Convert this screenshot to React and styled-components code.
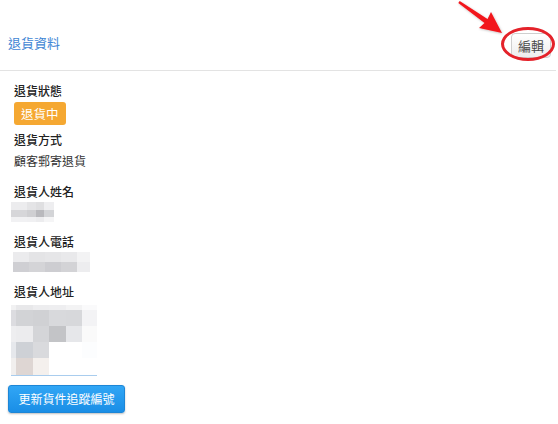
import React from "react";
import styled, { createGlobalStyle } from "styled-components";

const GlobalStyle = createGlobalStyle`
  html, body {
    margin: 0;
    padding: 0;
    background: #ffffff;
  }
  body {
    font-family: "Liberation Sans", "Noto Sans CJK TC", sans-serif;
    color: #333333;
  }
`;

const nameTiles = [
  ["#ececee", "#e4e4e6", "#dfdfe1", "#eeeef0"],
  ["#d6d6d9", "#cfcfd2", "#b9b9bd", "#d3d4d7"],
  ["#f1f1f3", "#f0f0f2", "#ececee", "#f5f5f6"],
];
const nameCols = [16, 9, 8, 10];
const nameRows = [8, 7, 5];

const phoneTiles = [
  ["#ebebed", "#e4e4e6", "#e6e6e8", "#e9e9eb", "#f3f3f4"],
  ["#cfcfd3", "#d4d4d7", "#cdcdd1", "#d3d3d6", "#ededef"],
];
const phoneCols = [16, 16, 16, 16, 13];
const phoneRows = [10, 10];

const addrTiles = [
  ["#f1f1f2", "#e8e8ea", "#ededef", "#eeeef0", "#f3f3f4", "#fafafb"],
  ["#dcdce0", "#d2d3d6", "#d0d1d4", "#d8d9dc", "#d7d8db", "#f3f3f5"],
  ["#eeeef0", "#ececee", "#d4d5d8", "#c3c4c7", "#e6e7ea", "#fafafa"],
  ["#e6e8ec", "#ced1d6", "#d9dadd", "#ffffff", "#ffffff", "#fcfdfe"],
  ["#f1efee", "#ded6d3", "#f4f0ed", "#ffffff", "#ffffff", "#ffffff"],
];
const addrCols = [5, 17, 16, 17, 16, 15];
const addrRows = [5, 16, 16, 16, 17];

function Mosaic({ tiles, cols, rows, underline }) {
  const width = cols.reduce((a, b) => a + b, 0);
  const height = rows.reduce((a, b) => a + b, 0) + (underline ? 1 : 0);
  const rects = [];
  let y = 0;
  rows.forEach((h, r) => {
    let x = 0;
    cols.forEach((w, c) => {
      rects.push(<rect key={r + "-" + c} x={x} y={y} width={w} height={h} fill={tiles[r][c]} />);
      x += w;
    });
    y += h;
  });
  return (
    <svg width={width} height={height} viewBox={`0 0 ${width} ${height}`}>
      {rects}
      {underline && <rect x={0} y={y} width={width} height={1} fill="#a9cdee" />}
    </svg>
  );
}

export default function App() {
  return (
    <>
      <GlobalStyle />
      <Page>
        <Header>
          <Title>退貨資料</Title>
          <EditWrap>
            <EditButton>編輯</EditButton>
            <Highlight />
          </EditWrap>
          <Arrow width="60" height="40" viewBox="450 0 60 40">
            <defs>
              <filter id="sh" x="-20%" y="-20%" width="140%" height="140%">
                <feDropShadow dx="0.6" dy="0.8" stdDeviation="0.8" floodColor="#000" floodOpacity="0.25" />
              </filter>
            </defs>
            <polygon
              points="459.7,1 487.5,19 491,12 502,33 479,28 484.5,23 458.3,3"
              fill="#f2161c"
              filter="url(#sh)"
            />
          </Arrow>
        </Header>

        <Content>
          <Field $gap={6}>
            <Label>退貨狀態</Label>
            <Badge>退貨中</Badge>
          </Field>

          <Field $gap={13}>
            <Label>退貨方式</Label>
            <Value>顧客郵寄退貨</Value>
          </Field>

          <Field $gap={11}>
            <Label>退貨人姓名</Label>
            <Blur $top={1} $shift={-3}>
              <Mosaic tiles={nameTiles} cols={nameCols} rows={nameRows} />
            </Blur>
          </Field>

          <Field $gap={11}>
            <Label>退貨人電話</Label>
            <Blur $top={1} $shift={-1}>
              <Mosaic tiles={phoneTiles} cols={phoneCols} rows={phoneRows} />
            </Blur>
          </Field>

          <Field $gap={0}>
            <Label>退貨人地址</Label>
            <Blur $top={4} $shift={-3}>
              <Mosaic tiles={addrTiles} cols={addrCols} rows={addrRows} underline />
            </Blur>
          </Field>

          <PrimaryButton>更新貨件追蹤編號</PrimaryButton>
        </Content>
      </Page>
    </>
  );
}

const Page = styled.div`
  width: 558px;
  height: 424px;
  background: #ffffff;
`;

const Header = styled.div`
  position: relative;
  display: flex;
  justify-content: space-between;
  align-items: flex-start;
  padding: 33px 5px 12px 8px;
  margin-right: 2px;
  border-bottom: 1px solid #e3e3e3;
`;

const Title = styled.div`
  margin-top: 1px;
  font-size: 13px;
  line-height: 18px;
  color: #3f86d4;
  font-family: "Noto Sans CJK TC", sans-serif;
`;

const EditWrap = styled.div`
  position: relative;
`;

const EditButton = styled.button`
  display: block;
  height: 25px;
  padding: 0 6px;
  border: 1px solid #cfcfcf;
  border-radius: 4px;
  background: linear-gradient(#ffffff, #eeeeee);
  color: #4a4a4a;
  font-size: 13px;
  line-height: 23px;
  font-family: "Noto Sans CJK TC", sans-serif;
`;

const Highlight = styled.div`
  position: absolute;
  left: -10px;
  top: -6px;
  width: 54px;
  height: 34px;
  box-sizing: border-box;
  border: 3px solid #e4222a;
  border-radius: 50%;
  pointer-events: none;
`;

const Arrow = styled.svg`
  position: absolute;
  left: 450px;
  top: 0;
  overflow: visible;
`;

const Content = styled.div`
  padding: 11px 8px 0 8px;
`;

const Field = styled.div`
  display: flex;
  flex-direction: column;
  align-items: flex-start;
  padding-left: 6px;
  margin-bottom: ${(p) => p.$gap}px;
`;

const Label = styled.div`
  font-size: 12px;
  line-height: 18px;
  font-weight: 500;
  color: #222222;
  font-family: "Noto Sans CJK TC", sans-serif;
`;

const Value = styled.div`
  margin-top: 3px;
  font-size: 12px;
  line-height: 18px;
  color: #333333;
  font-family: "Noto Sans CJK TC", sans-serif;
`;

const Badge = styled.span`
  margin-top: 2px;
  height: 23px;
  padding: 0 7px;
  border-radius: 3px;
  background: #f5a832;
  color: #ffffff;
  font-size: 12.5px;
  line-height: 23px;
  font-family: "Noto Sans CJK TC", sans-serif;
`;

const Blur = styled.div`
  display: flex;
  margin-top: ${(p) => p.$top}px;
  margin-left: ${(p) => p.$shift}px;
`;

const PrimaryButton = styled.button`
  display: block;
  margin-top: 9px;
  width: 117px;
  height: 28px;
  padding: 0;
  border: 1px solid #1d86d6;
  border-radius: 3px;
  background: linear-gradient(#31a6f5, #1a8ee6);
  box-shadow: 0 1px 2px rgba(0, 0, 0, 0.25);
  color: #ffffff;
  font-size: 12px;
  line-height: 26px;
  font-family: "Noto Sans CJK TC", sans-serif;
`;
